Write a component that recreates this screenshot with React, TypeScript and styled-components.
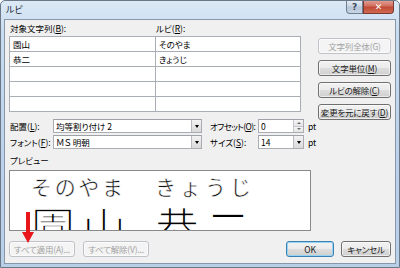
import React from 'react';
import styled, { createGlobalStyle } from 'styled-components';

const GlobalStyle = createGlobalStyle`
  html, body {
    margin: 0;
    padding: 0;
    background: #ffffff;
  }
  body {
    font-family: "Noto Sans CJK JP", "Noto Sans", sans-serif;
    font-feature-settings: "palt";
    font-size: 8.5px;
    color: #000;
  }
`;

const Window = styled.div`
  position: relative;
  width: 400px;
  height: 268px;
  box-sizing: border-box;
  border: 1px solid #6a7888;
  border-radius: 5px 5px 0 0;
  background: linear-gradient(180deg, #dce9f6 0%, #c9dcef 12%, #bcd2ea 60%, #b8cfe8 100%);
  padding: 0 3px 3px 3px;
  display: flex;
  flex-direction: column;
  overflow: hidden;
`;

const TitleBar = styled.div`
  height: 18px;
  flex-shrink: 0;
  display: flex;
  align-items: flex-start;
  justify-content: space-between;
`;

const Title = styled.div`
  padding: 4px 0 0 2px;
  font-size: 9px;
  line-height: 10px;
  color: #1e2a36;
`;

const Controls = styled.div`
  display: flex;
  margin-right: 2px;
  margin-top: -1px;
`;

const CaptionButton = styled.div<{ $close?: boolean }>`
  width: ${p => (p.$close ? 31 : 17)}px;
  height: 14px;
  box-sizing: border-box;
  border: 1px solid ${p => (p.$close ? '#7a3a36' : '#6f7f92')};
  border-top: none;
  border-radius: ${p => (p.$close ? '0 0 4px 0' : '0 0 0 4px')};
  background: ${p =>
    p.$close
      ? 'linear-gradient(180deg, #e3a49b 0%, #d2705f 45%, #c14a36 55%, #d06a4f 100%)'
      : 'linear-gradient(180deg, #e8eef5 0%, #cdd8e5 45%, #b6c5d7 55%, #c8d5e3 100%)'};
  display: flex;
  align-items: center;
  justify-content: center;
  color: ${p => (p.$close ? '#ffffff' : '#3a4a5c')};
  font-family: "DejaVu Sans", sans-serif;
  font-weight: bold;
  font-size: 9px;
`;

const Client = styled.div`
  position: relative;
  flex: 1;
  min-height: 0;
  background: #f0f0f0;
  border: 1px solid #8796a8;
  padding: 3px 4px 5px 4px;
  display: flex;
  flex-direction: column;
`;

const TopArea = styled.div`
  display: flex;
  align-items: flex-start;
  gap: 17px;
  height: 89px;
`;

const LeftCol = styled.div`
  display: flex;
  flex-direction: column;
  width: 292px;
`;

const ColumnHeads = styled.div`
  display: grid;
  grid-template-columns: 146px 146px;
  height: 13px;
  line-height: 11px;
`;

const Label = styled.span<{ $w?: number; $tight?: boolean }>`
  display: inline-block;
  white-space: nowrap;
  ${p => (p.$w ? `width: ${p.$w}px; flex-shrink: 0;` : '')}
  ${p => (p.$tight ? 'letter-spacing: -0.6px;' : '')}
  padding-left: 1px;
`;

const Table = styled.div`
  display: grid;
  grid-template-columns: 145px 144px;
  grid-auto-rows: 14px;
  gap: 1px;
  padding: 1px;
  background: #a9adb4;
`;

const Cell = styled.div`
  background: #ffffff;
  padding: 0 3px;
  line-height: 14px;
  white-space: nowrap;
`;

const SideButtons = styled.div`
  display: flex;
  flex-direction: column;
  gap: 6px;
  margin-top: 15px;
`;

const Button = styled.div<{ $w: number; $disabled?: boolean; $focused?: boolean }>`
  width: ${p => p.$w}px;
  height: 16px;
  flex-shrink: 0;
  box-sizing: border-box;
  border: 1px solid ${p => (p.$disabled ? '#bfc3c7' : p.$focused ? '#3c7fb1' : '#707070')};
  border-radius: 3px;
  background: ${p =>
    p.$disabled
      ? '#f4f4f4'
      : 'linear-gradient(180deg, #f2f2f2 0%, #ebebeb 48%, #dddddd 52%, #cfcfcf 100%)'};
  box-shadow: ${p => (p.$focused ? 'inset 0 0 0 1px #97d4f4' : 'inset 0 0 0 1px rgba(255,255,255,0.6)')};
  color: ${p => (p.$disabled ? '#a3a3a3' : '#1a1a1a')};
  display: flex;
  align-items: center;
  justify-content: center;
  white-space: nowrap;
  letter-spacing: -0.2px;
  line-height: 12px;
`;

const OptionRows = styled.div`
  display: flex;
  flex-direction: column;
  gap: 2px;
  margin-top: 7px;
`;

const OptionRow = styled.div`
  display: flex;
  align-items: center;
  height: 14px;
`;

const Field = styled.div<{ $w: number }>`
  width: ${p => p.$w}px;
  height: 14px;
  flex-shrink: 0;
  box-sizing: border-box;
  border: 1px solid #abadb3;
  border-top-color: #9ea1a8;
  background: #ffffff;
  display: flex;
  align-items: stretch;
`;

const FieldText = styled.div`
  flex: 1;
  padding-left: 2px;
  line-height: 12px;
  white-space: nowrap;
`;

const DropButton = styled.div`
  width: 10px;
  box-sizing: border-box;
  border-left: 1px solid #b8bcc2;
  background: linear-gradient(180deg, #f3f3f3 0%, #e6e6e6 50%, #d9d9d9 100%);
  display: flex;
  align-items: center;
  justify-content: center;

  &::after {
    content: '';
    border-left: 2.5px solid transparent;
    border-right: 2.5px solid transparent;
    border-top: 3px solid #000;
  }
`;

const Spin = styled.div`
  width: 9px;
  display: flex;
  flex-direction: column;
  border-left: 1px solid #c3c6cb;
`;

const SpinPart = styled.div<{ $up?: boolean }>`
  flex: 1;
  background: linear-gradient(180deg, #f6f6f6, #e4e4e4);
  display: flex;
  align-items: center;
  justify-content: center;
  ${p => (p.$up ? 'border-bottom: 1px solid #c3c6cb;' : '')}

  &::after {
    content: '';
    border-left: 2px solid transparent;
    border-right: 2px solid transparent;
    ${p => (p.$up ? 'border-bottom: 2px solid #6a6a6a;' : 'border-top: 2px solid #6a6a6a;')}
  }
`;

const Unit = styled.span`
  margin-left: 4px;
`;

const PreviewLabel = styled.div`
  margin-top: 5px;
  height: 13px;
  line-height: 12px;
  padding-left: 1px;
`;

const PreviewBox = styled.div`
  margin-top: 3px;
  width: 302px;
  height: 61px;
  flex-shrink: 0;
  box-sizing: border-box;
  border: 1px solid #8a8a8a;
  background: #ffffff;
  overflow: hidden;
  display: flex;
  gap: 22px;
  padding: 4px 0 0 21px;
`;

const RubyGroup = styled.div<{ $w: number }>`
  width: ${p => p.$w}px;
  display: flex;
  flex-direction: column;
  flex-shrink: 0;
`;

const RubyText = styled.div<{ $w: number }>`
  width: ${p => p.$w}px;
  display: flex;
  justify-content: space-between;
  font-size: 21px;
  line-height: 22px;
  font-feature-settings: normal;
  -webkit-text-stroke: 0.5px #fff;
  color: #111;
`;

const BaseText = styled.div`
  margin-top: 7px;
  display: flex;
  font-size: 44px;
  line-height: 44px;
  font-feature-settings: normal;
  -webkit-text-stroke: 1.3px #fff;
  color: #000;

  span {
    width: 51px;
    flex-shrink: 0;
  }
`;

const BottomRow = styled.div`
  margin-top: 10px;
  display: flex;
  gap: 8px;
`;

const Spacer = styled.div`
  flex: 1;
`;

const Arrow = styled.svg`
  position: absolute;
  left: 17px;
  top: 192px;
`;

const rows = [
  ['園山', 'そのやま'],
  ['恭二', 'きょうじ'],
  ['', ''],
  ['', ''],
  ['', ''],
];

const App: React.FC = () => {
  return (
    <>
      <GlobalStyle />
      <Window>
        <TitleBar>
          <Title>ルビ</Title>
          <Controls>
            <CaptionButton>?</CaptionButton>
            <CaptionButton $close>✕</CaptionButton>
          </Controls>
        </TitleBar>
        <Client>
          <TopArea>
            <LeftCol>
              <ColumnHeads>
                <Label>対象文字列(<u>B</u>):</Label>
                <Label>ルビ(<u>R</u>):</Label>
              </ColumnHeads>
              <Table>
                {rows.map((r, i) => (
                  <React.Fragment key={i}>
                    <Cell>{r[0]}</Cell>
                    <Cell>{r[1]}</Cell>
                  </React.Fragment>
                ))}
              </Table>
            </LeftCol>
            <SideButtons>
              <Button $w={73} $disabled>文字列全体(G)</Button>
              <Button $w={73}>文字単位(<u>M</u>)</Button>
              <Button $w={73}>ルビの解除(<u>C</u>)</Button>
              <Button $w={73}>変更を元に戻す(<u>D</u>)</Button>
            </SideButtons>
          </TopArea>

          <OptionRows>
            <OptionRow>
              <Label $w={43}>配置(<u>L</u>):</Label>
              <Field $w={149}>
                <FieldText>均等割り付け 2</FieldText>
                <DropButton />
              </Field>
              <Label $w={48} $tight style={{ marginLeft: 7 }}>オフセット(<u>O</u>):</Label>
              <Field $w={46}>
                <FieldText>0</FieldText>
                <Spin>
                  <SpinPart $up />
                  <SpinPart />
                </Spin>
              </Field>
              <Unit>pt</Unit>
            </OptionRow>
            <OptionRow>
              <Label $w={43}>フォント(<u>F</u>):</Label>
              <Field $w={149}>
                <FieldText>ＭＳ 明朝</FieldText>
                <DropButton />
              </Field>
              <Label $w={48} style={{ marginLeft: 7 }}>サイズ(<u>S</u>):</Label>
              <Field $w={46}>
                <FieldText>14</FieldText>
                <DropButton />
              </Field>
              <Unit>pt</Unit>
            </OptionRow>
          </OptionRows>

          <PreviewLabel>プレビュー</PreviewLabel>
          <PreviewBox>
            <RubyGroup $w={102}>
              <RubyText $w={92}>
                <span>そ</span><span>の</span><span>や</span><span>ま</span>
              </RubyText>
              <BaseText>
                <span>園</span><span>山</span>
              </BaseText>
            </RubyGroup>
            <RubyGroup $w={104}>
              <RubyText $w={96}>
                <span>き</span><span>ょ</span><span>う</span><span>じ</span>
              </RubyText>
              <BaseText>
                <span>恭</span><span>二</span>
              </BaseText>
            </RubyGroup>
          </PreviewBox>

          <BottomRow>
            <Button $w={66} $disabled>すべて適用(A)...</Button>
            <Button $w={66} $disabled>すべて解除(V)...</Button>
            <Spacer />
            <Button $w={48} $focused>OK</Button>
            <Button $w={50} style={{ marginLeft: -1 }}>キャンセル</Button>
          </BottomRow>

          <Arrow width="12" height="31" viewBox="0 0 12 31">
            <rect x="4" y="0" width="4" height="21" fill="#e8161b" />
            <polygon points="0,20 12,20 6,31" fill="#e8161b" />
          </Arrow>
        </Client>
      </Window>
    </>
  );
};

export default App;
